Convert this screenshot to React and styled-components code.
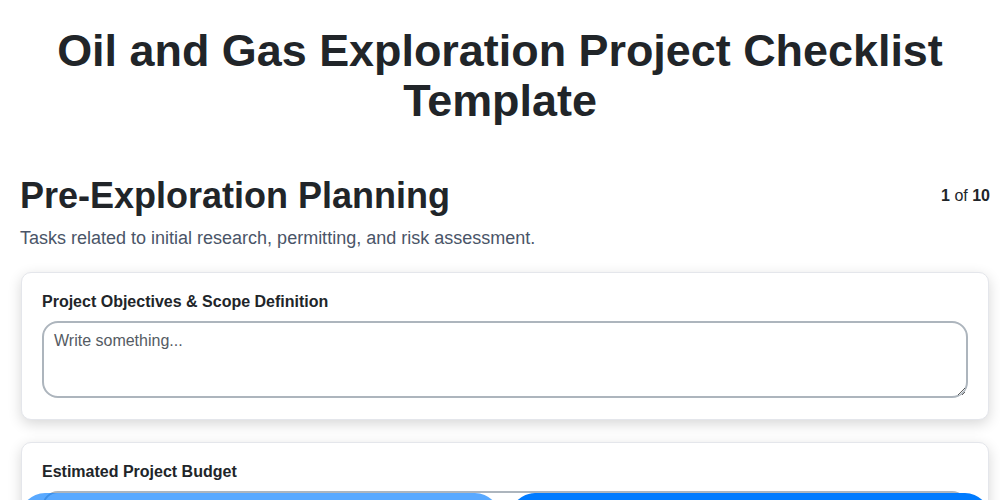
import React from "react";
import styled, { createGlobalStyle } from "styled-components";

const GlobalStyle = createGlobalStyle`
  html, body {
    margin: 0;
    padding: 0;
    background: #ffffff;
    font-family: "Liberation Sans", Arial, sans-serif;
    color: #212529;
  }
  * { box-sizing: border-box; }
`;

const Page = styled.div`
  padding: 26px 0 80px;
`;

const Title = styled.h1`
  margin: 0 0 49px;
  text-align: center;
  font-size: 44.9px;
  line-height: 50px;
  font-weight: 700;
  color: #212529;
`;

const Section = styled.section`
  padding: 0 10px 0 20px;
`;

const HeaderRow = styled.div`
  display: flex;
  justify-content: space-between;
  align-items: center;
`;

const SectionTitle = styled.h2`
  margin: 0;
  font-size: 36px;
  font-weight: 700;
  color: #212529;
`;

const Counter = styled.div`
  font-size: 16px;
  color: #212529;
  b { font-weight: 700; }
`;

const Subtitle = styled.p`
  margin: 11px 0 23px;
  font-size: 18px;
  color: #4a5568;
`;

const Card = styled.div`
  background: #fff;
  border: 1px solid #e4e6eb;
  border-radius: 10px;
  padding: 20px 20px 21px;
  margin: 0 1px 22px 1px;
  box-shadow: 0 4px 14px rgba(0, 0, 0, 0.16);
`;

const Label = styled.label`
  display: block;
  font-size: 16px;
  font-weight: 700;
  color: #212529;
  margin-bottom: 10px;
`;

const TextArea = styled.textarea`
  display: block;
  width: 100%;
  height: 77px;
  padding: 9px 10px;
  border: 2px solid #adb5bd;
  border-radius: 16px;
  font-family: "Liberation Sans", Arial, sans-serif;
  font-size: 16px;
  color: #212529;
  background: #fff;
  outline: none;
  &::placeholder { color: #555b63; }
`;

const Input = styled.input`
  display: block;
  width: 100%;
  height: 44px;
  padding: 9px 10px;
  border: 2px solid #adb5bd;
  border-radius: 16px;
  font-family: "Liberation Sans", Arial, sans-serif;
  font-size: 16px;
  outline: none;
  &::placeholder { color: #555b63; }
`;

const Footer = styled.div`
  position: fixed;
  left: 20px;
  right: 10px;
  bottom: -57px;
  display: flex;
  gap: 10px;
`;

const NavButton = styled.button`
  flex: 1;
  height: 64px;
  border: none;
  border-radius: 25px;
  background: #007bff;
  color: #fff;
  font-family: "Liberation Sans", Arial, sans-serif;
  font-size: 16px;
  font-weight: 700;
  opacity: ${(p) => (p.disabled ? 0.65 : 1)};
`;

export default function App() {
  return (
    <Page>
      <GlobalStyle />
      <Title>Oil and Gas Exploration Project Checklist Template</Title>
      <Section>
        <HeaderRow>
          <SectionTitle>Pre-Exploration Planning</SectionTitle>
          <Counter>
            <b>1</b> of <b>10</b>
          </Counter>
        </HeaderRow>
        <Subtitle>
          Tasks related to initial research, permitting, and risk assessment.
        </Subtitle>
        <Card>
          <Label>Project Objectives &amp; Scope Definition</Label>
          <TextArea placeholder="Write something..." />
        </Card>
        <Card>
          <Label>Estimated Project Budget</Label>
          <Input type="text" placeholder="Write something..." />
        </Card>
      </Section>
      <Footer>
        <NavButton disabled>Previous</NavButton>
        <NavButton>Next</NavButton>
      </Footer>
    </Page>
  );
}
